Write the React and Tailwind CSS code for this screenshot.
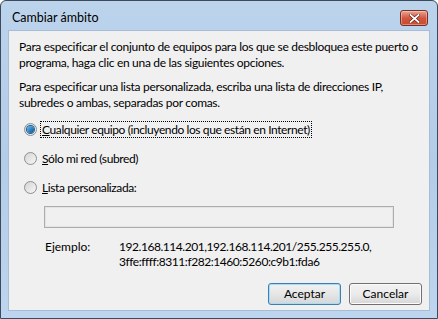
import React from "react";

function Radio({ checked }) {
  return (
    <span className="relative flex h-[13px] w-[13px] shrink-0 items-center justify-center rounded-full border border-[#8e8f8f] bg-gradient-to-br from-[#d4d4d4] to-[#f7f7f7]">
      {checked && (
        <span className="h-[7px] w-[7px] rounded-full bg-gradient-to-br from-[#5bc0ff] to-[#0d4f86] shadow-[0_0_0_1px_#1a5d96]" />
      )}
    </span>
  );
}

export default function App() {
  return (
    <div
      className="flex h-[319px] w-[438px] flex-col overflow-hidden rounded-t-[6px] border border-[#3c4a5c] bg-gradient-to-b from-[#bcd3ec] via-[#b3cce8] to-[#bdd5ee] text-[12px] text-black"
      style={{ fontFamily: 'Lato, "Open Sans", sans-serif' }}
    >
      {/* title bar */}
      <div className="flex h-[29px] shrink-0 items-start justify-between pl-[11px] pr-[9px]">
        <span className="mt-[9px] text-[12.5px] leading-[16px] text-black">Cambiar ámbito</span>
        <span className="mt-[9px] flex h-[16px] w-[28px] items-center justify-center rounded-[3px] border border-[#7a2e22] bg-gradient-to-b from-[#e8a493] via-[#d2573f] to-[#c94a2e] shadow-[inset_0_0_0_1px_rgba(255,255,255,0.35)]">
          <svg width="11" height="9" viewBox="0 0 11 9">
            <path d="M1.5 1 L9.5 8 M9.5 1 L1.5 8" stroke="#5a1a10" strokeWidth="3" strokeLinecap="square" />
            <path d="M1.5 1 L9.5 8 M9.5 1 L1.5 8" stroke="#ffffff" strokeWidth="1.8" strokeLinecap="square" />
          </svg>
        </span>
      </div>
      {/* body */}
      <div className="flex min-h-0 flex-1 px-[7px] pb-[7px]">
        <div className="flex min-h-0 min-w-0 flex-1 flex-col overflow-hidden whitespace-nowrap border border-[#a7bcd6] bg-[#f0f0f0] pl-[10px] pr-[7px] pt-[8px]">
          <p className="leading-[16px] tracking-[-0.3px]">
            Para especificar el conjunto de equipos para los que se desbloquea este puerto o
            <br />
            programa, haga clic en una de las siguientes opciones.
          </p>
          <p className="mt-[8px] leading-[16px] tracking-[-0.3px]">
            Para especificar una lista personalizada, escriba una lista de direcciones IP,
            <br />
            subredes o ambas, separadas por comas.
          </p>
          <div className="mt-[10px] flex flex-col gap-[12px] pl-[5px] tracking-[-0.4px]">
            <div className="flex h-[17px] items-center gap-[3px]">
              <Radio checked />
              <span className="border border-dotted border-black px-[1px] leading-[15px]">
                <u>C</u>ualquier equipo (incluyendo los que están en Internet)
              </span>
            </div>
            <div className="flex h-[17px] items-center gap-[3px]">
              <Radio />
              <span className="px-[2px] leading-[15px]">
                <u>S</u>ólo mi red (subred)
              </span>
            </div>
            <div className="flex h-[17px] items-center gap-[3px]">
              <Radio />
              <span className="px-[2px] leading-[15px]">
                <u>L</u>ista personalizada:
              </span>
            </div>
          </div>
          <div className="ml-[25px] mt-[10px] h-[22px] w-[350px] shrink-0 border border-[#adadad] bg-[#f0f0f0] shadow-[inset_0_0_0_1px_#e3e3e3]" />
          <div className="ml-[26px] mt-[11px] grid grid-cols-[74px_auto] leading-[15px]">
            <span>Ejemplo:</span>
            <span className="tracking-[-0.45px]">
              192.168.114.201,192.168.114.201/255.255.255.0,
              <br />
              3ffe:ffff:8311:f282:1460:5260:c9b1:fda6
            </span>
          </div>
          <div className="mt-auto flex justify-end gap-[8px] pb-[5px]">
            <button className="h-[22px] w-[73px] rounded-[3px] border border-[#3c7fb1] bg-gradient-to-b from-[#f2f2f2] via-[#e6e6e6] to-[#d6d6d6] shadow-[inset_0_0_0_1px_#a6dcf5] text-[12px]">
              Aceptar
            </button>
            <button className="h-[22px] w-[73px] rounded-[3px] border border-[#707070] bg-gradient-to-b from-[#f2f2f2] via-[#ebebeb] to-[#d6d6d6] shadow-[inset_0_0_0_1px_#fcfcfc] text-[12px]">
              Cancelar
            </button>
          </div>
        </div>
      </div>
    </div>
  );
}
